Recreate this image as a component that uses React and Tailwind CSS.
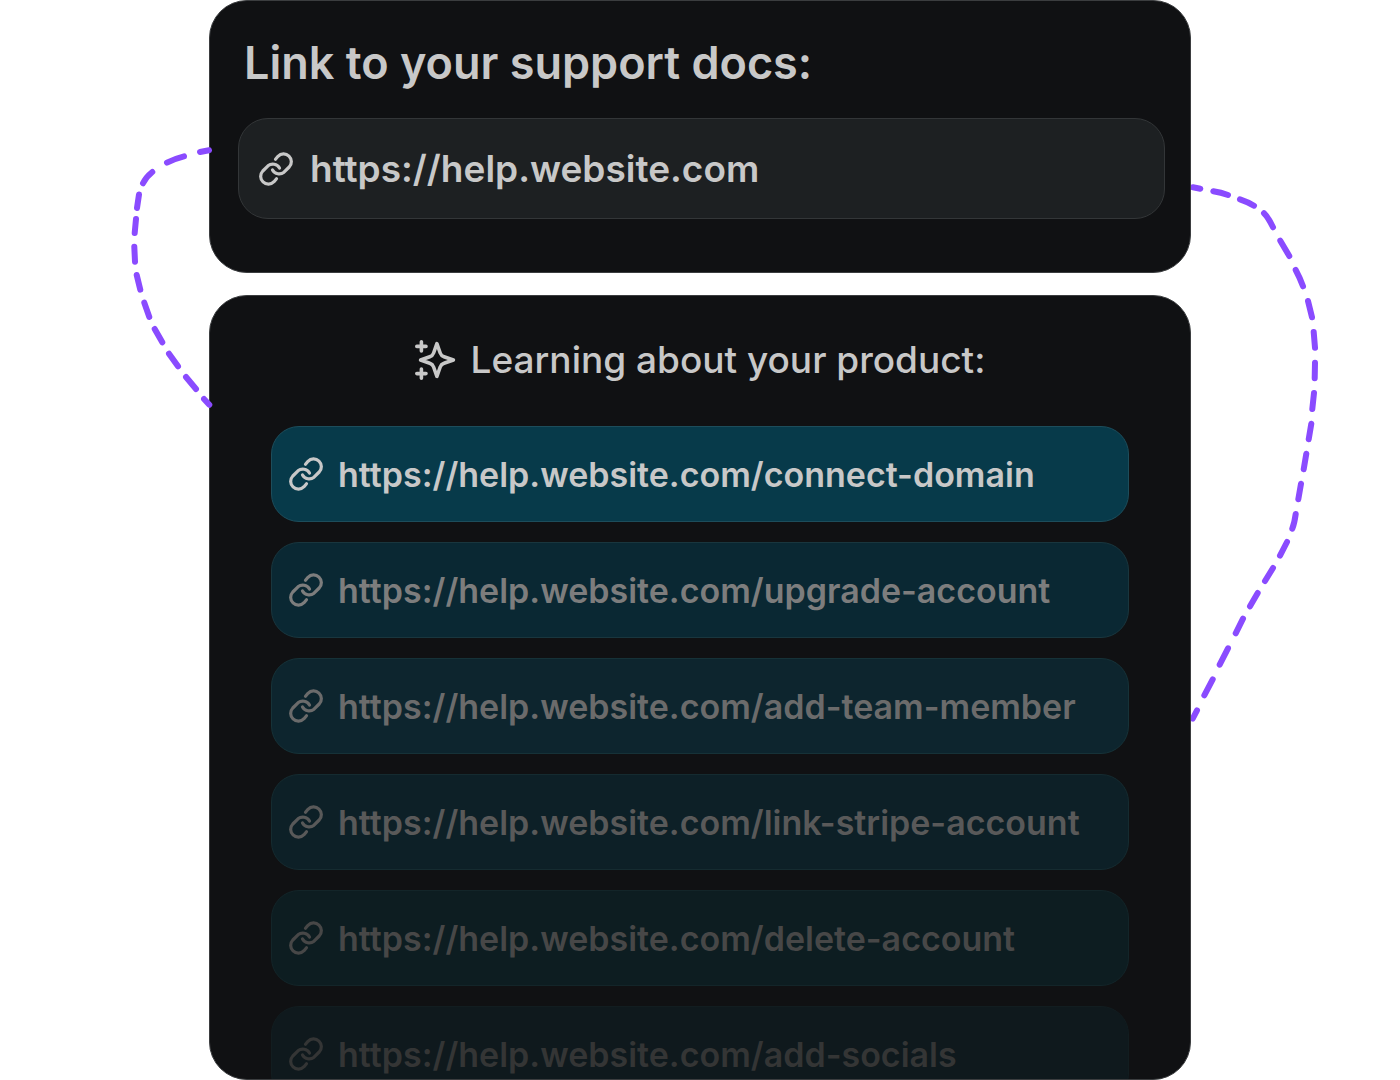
// App.jsx
const pages = [
  { url: "https://help.website.com/connect-domain", style: "bg-[#073a4a] border-[#1d4d5b] text-[#c8c8c8]" },
  { url: "https://help.website.com/upgrade-account", style: "bg-[#0a2833] border-[#19363e] text-[#7d7d7d]" },
  { url: "https://help.website.com/add-team-member", style: "bg-[#0d252e] border-[#163238] text-[#6b6b6b]" },
  { url: "https://help.website.com/link-stripe-account", style: "bg-[#0d2027] border-[#152b30] text-[#595959]" },
  { url: "https://help.website.com/delete-account", style: "bg-[#0d1d21] border-[#132529] text-[#474747]" },
  { url: "https://help.website.com/add-socials", style: "bg-[#0f191d] border-[#121d20] text-[#343535]" },
];

function LinkIcon() {
  return (
    <svg
      className="size-9 shrink-0"
      viewBox="0 0 36 36"
      fill="none"
      stroke="currentColor"
      strokeWidth="3.2"
      strokeLinecap="round"
      strokeLinejoin="round"
      aria-hidden="true"
    >
      <path d="M17.5 8.2 20 5.3A7.7 7.7 0 0 1 31.2 16L26 21.2A7.7 7.7 0 0 1 14.5 19" />
      <path d="M18.5 27.8 16 30.7A7.7 7.7 0 0 1 4.8 20L10 14.8A7.7 7.7 0 0 1 21.5 17" />
    </svg>
  );
}

function SparkleIcon() {
  return (
    <svg
      className="h-10 w-[42px] shrink-0"
      viewBox="0 0 42 40"
      fill="none"
      stroke="currentColor"
      strokeWidth="3.6"
      strokeLinecap="round"
      strokeLinejoin="round"
      aria-hidden="true"
    >
      <path d="M21.9 3.7 25.2 13Q26.2 15.8 29 16.7L38.4 20 29 23.3Q26.2 24.2 25.2 27L21.9 36.3 18.6 27Q17.6 24.2 14.8 23.3L5.6 20 14.8 16.7Q17.6 15.8 18.6 13Z" />
      <path d="M6.4 1.8V11M1.8 6.4H11M6.4 29V38.2M1.8 33.6H11" />
    </svg>
  );
}

// Dashed connectors that tie the two panels together
function LeftConnector() {
  return (
    <svg
      className="absolute top-36 right-full -mr-1 h-[268px] w-[83px]"
      viewBox="130 144 83 268"
      fill="none"
      stroke="#8a4bff"
      strokeWidth="6"
      strokeLinecap="round"
      aria-hidden="true"
    >
      <path d="M200 152 209 150.3M167 162.7Q175 158.5 184 156.3M143 183.3Q146 177 152.3 172M137 208 139 194.5M134.7 233 136 219M134.3 246.7 135 261.7M136.7 275 140.3 289.7M144.3 302.7 149.3 317M154.7 329 162.3 342.3M169 353.7 178 366.3M186 377 196 389M204 399 209.3 404.7" />
    </svg>
  );
}

function RightConnector() {
  return (
    <svg
      className="absolute top-44 left-full h-[550px] w-[130px]"
      viewBox="1191 176 130 550"
      fill="none"
      stroke="#8a4bff"
      strokeWidth="6"
      strokeLinecap="round"
      aria-hidden="true"
    >
      <path d="M1193 187.3 1200.3 188.7M1213.3 191.3Q1221 192.5 1228 195M1240 199.3Q1248 202 1254 205.7M1264 213.3Q1268 217 1273 227.3M1280.3 240.7 1289.3 256M1295.7 270Q1300 278 1303 286.3M1308 301 1312 317.3M1313.7 332 1315 347.7M1315 362.7 1314.7 378.3M1314 393 1312.3 409M1311.3 423.7 1308.7 439.3" />
      <path d="M1306.3 453.7 1303.7 469.3M1301 483.7 1298.3 499.3M1295.7 514Q1294.5 523 1292.3 528.7M1287 542 1280 555.7M1273 568 1265 581M1257.7 593 1250 606.3M1243 618.7 1235.7 633.3M1228 648.3 1219.7 664.7M1212.7 679.3 1204.3 695.3M1197 710.3 1192.7 718.7" />
    </svg>
  );
}

function PageLink({ page }) {
  return (
    <li>
      <a
        href={page.url}
        className={`flex h-24 items-center gap-[14px] rounded-[28px] border px-4 text-[34px] font-semibold whitespace-nowrap ${page.style}`}
      >
        <LinkIcon />
        {page.url}
      </a>
    </li>
  );
}

export default function App() {
  return (
    <div className="h-screen overflow-hidden bg-white font-['Inter',sans-serif] text-[#c8c8c8]">
      <div className="relative mx-auto flex h-full w-full max-w-[982px] flex-col gap-[22px]">
        <section className="rounded-[38px] border border-[#3b3d3f] bg-[#101113] pt-8 pr-[25px] pb-[53px] pl-7">
          <label htmlFor="docs-url" className="block px-[6px] text-[45px] leading-[60px] font-semibold">
            Link to your support docs:
          </label>
          <div className="mt-[25px] flex h-[101px] items-center gap-4 rounded-[30px] border border-[#333638] bg-[#1d2022] px-[19px]">
            <LinkIcon />
            <input
              id="docs-url"
              type="url"
              defaultValue="https://help.website.com"
              className="min-w-0 flex-1 bg-transparent text-[37px] font-semibold outline-none"
            />
          </div>
        </section>

        <section className="min-h-0 flex-1 overflow-hidden rounded-[38px] border border-[#3b3d3f] bg-[#101113] px-[61px] pt-10">
          <h2 className="flex items-center justify-center gap-[14px] text-[37px] leading-[48px] font-medium whitespace-nowrap">
            <SparkleIcon />
            Learning about your product:
          </h2>
          <ul className="mt-[42px] space-y-5">
            {pages.map((page) => (
              <PageLink key={page.url} page={page} />
            ))}
          </ul>
        </section>

        <LeftConnector />
        <RightConnector />
      </div>
    </div>
  );
}
